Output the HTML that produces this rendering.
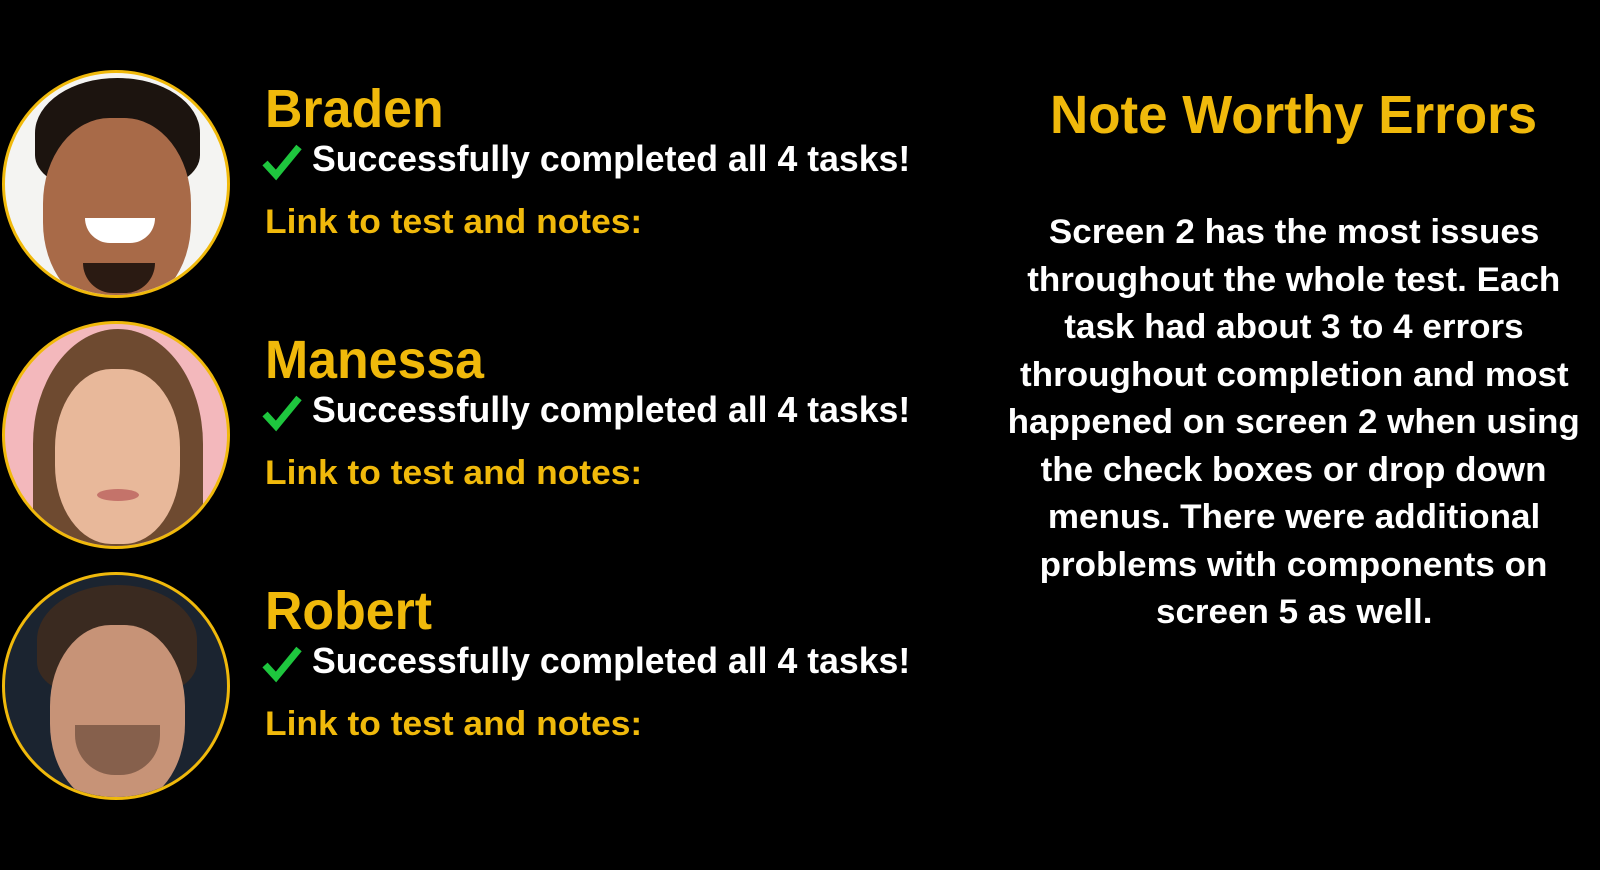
<!DOCTYPE html>
<html><head><meta charset="utf-8"><style>
html,body{margin:0;padding:0;background:#000;width:1600px;height:870px;overflow:hidden;font-family:"Liberation Sans",sans-serif;font-weight:bold}
.c{position:absolute;left:2px;width:222px;height:222px;border-radius:50%;border:3px solid #f0b90b;overflow:hidden}
.t{position:absolute;white-space:nowrap;transform-origin:0 0}
.y{color:#f0b90b}.w{color:#fff}
.r{position:absolute;left:994px;width:600px;text-align:center;white-space:nowrap}
.r span{display:inline-block}
svg.k{position:absolute}
</style></head><body>

<div class="c" style="top:70px;background:#f4f4f2">
 <div style="position:absolute;left:30px;top:5px;width:165px;height:110px;border-radius:50% 50% 30% 30%;background:#1c140f"></div>
 <div style="position:absolute;left:38px;top:45px;width:148px;height:190px;border-radius:45% 45% 45% 45%;background:#a86a48"></div>
 <div style="position:absolute;left:80px;top:145px;width:70px;height:25px;border-radius:0 0 40px 40px;background:#fff"></div>
 <div style="position:absolute;left:78px;top:190px;width:72px;height:30px;border-radius:0 0 40px 40px;background:#2a1a12"></div>
</div>
<div class="c" style="top:321px;background:#f3b8bc">
 <div style="position:absolute;left:28px;top:5px;width:170px;height:230px;border-radius:50% 50% 20% 20%;background:#6e4a30"></div>
 <div style="position:absolute;left:50px;top:45px;width:125px;height:175px;border-radius:45%;background:#e8b89a"></div>
 <div style="position:absolute;left:92px;top:165px;width:42px;height:12px;border-radius:50%;background:#c4736a"></div>
</div>
<div class="c" style="top:572px;background:#1b2430">
 <div style="position:absolute;left:32px;top:10px;width:160px;height:110px;border-radius:50% 50% 30% 30%;background:#3a2a20"></div>
 <div style="position:absolute;left:45px;top:50px;width:135px;height:180px;border-radius:45%;background:#c79377"></div>
 <div style="position:absolute;left:70px;top:150px;width:85px;height:50px;border-radius:0 0 40px 40px;background:#6b4a3a;opacity:.7"></div>
</div>

<div class="t y" style="left:265px;top:78px;font-size:54px;transform:scaleX(0.96)">Braden</div>
<div class="t y" style="left:265px;top:329px;font-size:54px;transform:scaleX(0.96)">Manessa</div>
<div class="t y" style="left:265px;top:580px;font-size:54px;transform:scaleX(0.96)">Robert</div>

<svg class="k" style="left:262px;top:143px" width="40" height="38" viewBox="0 0 40 38"><path d="M3 20 L14 32 L37 4" fill="none" stroke="#1ec63e" stroke-width="7"/></svg>
<svg class="k" style="left:262px;top:394px" width="40" height="38" viewBox="0 0 40 38"><path d="M3 20 L14 32 L37 4" fill="none" stroke="#1ec63e" stroke-width="7"/></svg>
<svg class="k" style="left:262px;top:645px" width="40" height="38" viewBox="0 0 40 38"><path d="M3 20 L14 32 L37 4" fill="none" stroke="#1ec63e" stroke-width="7"/></svg>

<div class="t w" style="left:312px;top:138px;font-size:36px;transform:scaleX(0.99)">Successfully completed all 4 tasks!</div>
<div class="t w" style="left:312px;top:389px;font-size:36px;transform:scaleX(0.99)">Successfully completed all 4 tasks!</div>
<div class="t w" style="left:312px;top:640px;font-size:36px;transform:scaleX(0.99)">Successfully completed all 4 tasks!</div>

<div class="t y" style="left:265px;top:203px;font-size:34px;transform:scaleX(1.04)">Link to test and notes:</div>
<div class="t y" style="left:265px;top:454px;font-size:34px;transform:scaleX(1.04)">Link to test and notes:</div>
<div class="t y" style="left:265px;top:705px;font-size:34px;transform:scaleX(1.04)">Link to test and notes:</div>

<div class="r y" style="top:84px;font-size:54px"><span style="transform:scaleX(0.98)">Note Worthy Errors</span></div>
<div class="r w" style="top:209px;font-size:34px;line-height:47.5px">
<span style="transform:scaleX(1.03)">Screen 2 has the most issues</span><br>
<span style="transform:scaleX(1.03)">throughout the whole test. Each</span><br>
<span style="transform:scaleX(1.03)">task had about 3 to 4 errors</span><br>
<span style="transform:scaleX(1.03)">throughout completion and most</span><br>
<span style="transform:scaleX(1.03)">happened on screen 2 when using</span><br>
<span style="transform:scaleX(1.03)">the check boxes or drop down</span><br>
<span style="transform:scaleX(1.03)">menus. There were additional</span><br>
<span style="transform:scaleX(1.03)">problems with components on</span><br>
<span style="transform:scaleX(1.03)">screen 5 as well.</span>
</div>
</body></html>
